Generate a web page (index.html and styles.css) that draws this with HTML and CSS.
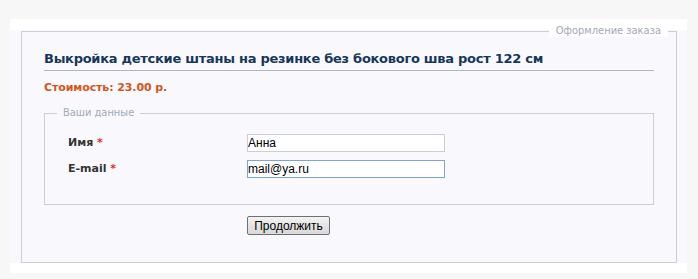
FILE: index.html
```html
<!DOCTYPE html>
<html lang="ru">
<head>
<meta charset="utf-8">
<title>Оформление заказа</title>
<link rel="stylesheet" href="styles.css">
</head>
<body>
<div class="page">
  <div class="panel">
    <fieldset class="order">
      <legend class="order-legend">Оформление заказа</legend>
      <h1 class="title">Выкройка детские штаны на резинке без бокового шва рост 122 см</h1>
      <div class="price">Стоимость: 23.00 р.</div>
      <fieldset class="data">
        <legend class="data-legend">Ваши данные</legend>
        <div class="rows">
          <label class="label" for="name">Имя <span class="req">*</span></label>
          <input class="field" id="name" type="text" value="Анна">
          <label class="label" for="email">E-mail <span class="req">*</span></label>
          <input class="field field-focus" id="email" type="text" value="mail@ya.ru">
        </div>
      </fieldset>
      <div class="actions">
        <button class="btn" type="button">Продолжить</button>
      </div>
    </fieldset>
  </div>
</div>
</body>
</html>
```

FILE: styles.css
```css
html, body {
  margin: 0;
  padding: 0;
}
body {
  background: #f7f7f7;
  font-family: "DejaVu Sans", Verdana, sans-serif;
}
.page {
  margin: 19px 0 0 10px;
  width: 677px;
  background: #ffffff;
  padding: 11px 0 10px;
}
.panel {
  display: flex;
  flex-direction: column;
  background: #f9f9fd;
  padding: 0 10px 0 11px;
}
.order {
  margin: -5px 0 0 0;
  border: 1px solid #c9d0da;
  padding: 14px 22px 27px 22px;
  min-width: 0;
}
.order-legend {
  margin-left: auto;
  margin-right: -14px;
  padding: 0 7px 0 7px;
  background: #ffffff;
  color: #a1a9b7;
  font-family: "DejaVu Sans Condensed", "DejaVu Sans", sans-serif;
  font-size: 11px;
  line-height: 12px;
}
.title {
  margin: 0;
  font-size: 13px;
  line-height: 16px;
  font-weight: bold;
  letter-spacing: -0.27px;
  color: #17365a;
  padding-bottom: 3px;
  border-bottom: 1px solid #adb6c4;
}
.price {
  margin-top: 10px;
  font-size: 11px;
  line-height: 14px;
  font-weight: bold;
  letter-spacing: -0.1px;
  color: #d4561e;
}
.data {
  margin: 12px 0 0 0;
  border: 1px solid #c9d0da;
  padding: 0;
  min-width: 0;
}
.data-legend {
  margin-left: 12px;
  padding: 0 6px;
  color: #a1a9b7;
  font-family: "DejaVu Sans Condensed", "DejaVu Sans", sans-serif;
  font-size: 11px;
  line-height: 12px;
}
.rows {
  display: grid;
  grid-template-columns: 179px 198px;
  row-gap: 8px;
  align-items: center;
  padding: 15px 0 26px 23px;
}
.label {
  font-size: 11px;
  font-weight: bold;
  color: #333333;
  line-height: 14px;
}
.req {
  color: #e0301e;
}
.field {
  box-sizing: border-box;
  width: 198px;
  height: 18px;
  margin: 0;
  padding: 0;
  border: 1px solid #c7cfd9;
  background: #ffffff;
  font-family: "Liberation Sans", Arial, sans-serif;
  font-size: 12px;
  color: #000000;
  outline: none;
}
.field-focus {
  border-color: #7fa2d4;
}
.actions {
  margin-top: 11px;
  padding-left: 203px;
  display: flex;
}
.btn {
  box-sizing: border-box;
  width: 83px;
  height: 19px;
  margin: 0;
  padding: 0;
  border: 1px solid #707070;
  border-radius: 2px;
  background: linear-gradient(#f3f3f3, #e4e4e4 50%, #d9d9d9);
  font-family: "Liberation Sans", Arial, sans-serif;
  font-size: 12px;
  color: #000000;
}
```
